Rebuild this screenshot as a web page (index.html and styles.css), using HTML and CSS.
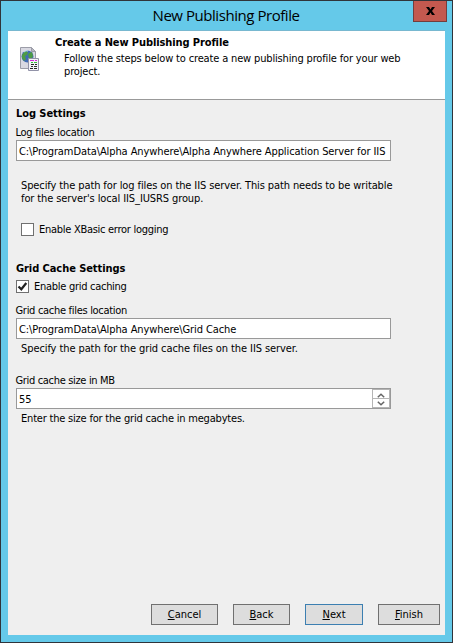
FILE: index.html
```
<!DOCTYPE html>
<html lang="en">
<head>
<meta charset="utf-8">
<title>New Publishing Profile</title>
<link rel="stylesheet" href="styles.css">
</head>
<body>
<div class="window">
  <div class="titlebar">
    <h1>New Publishing Profile</h1>
    <button class="close" aria-label="Close"><svg width="9" height="8" viewBox="0 0 9 8"><path d="M0 0H3L4.5 2.4 6 0H9L6 4 9 8H6L4.5 5.6 3 8H0L3 4Z"/></svg></button>
  </div>
  <div class="content">
    <header>
      <svg class="page-icon" width="21" height="26" viewBox="0 0 21 26">
        <path d="M1.500 1.500h11l4 4v17h-15z" fill="#d9d9e2" stroke="#9c9da8"/>
        <path d="M12.500 1.500v4h4z" fill="#b8b9c4" stroke="#9c9da8"/>
        <circle cx="8.500" cy="10.500" r="6" fill="#416bb5"/>
        <path d="M3 9l3-4 3 1-1 3-2 1 1 3-2 2-2-3zM10 7l3-1 1 4-2 4-2-2-1-3z" fill="#4d9b45"/>
        <path d="M5 6q2-2 4-1" stroke="#bfe0f5" fill="none"/>
        <path d="M9.500 12.500h10v12h-10z" fill="#f2f2f8" stroke="#9293a8"/>
        <path d="M11 14.500h4m1 0h2" stroke="#d02ad8"/>
        <path d="M12 16.500h2m1 0h3" stroke="#35b838"/>
        <path d="M12 18.500h3m1 0h2M11 22.500h3m1 0h3" stroke="#222"/>
        <path d="M12 20.500h2m1 0h3" stroke="#333"/>
      </svg>
      <div class="heading">
        <h2>Create a New Publishing Profile</h2>
        <p>Follow the steps below to create a new publishing profile for your web<br>project.</p>
      </div>
    </header>
    <main>
      <section class="log">
        <h2>Log Settings</h2>
        <label class="field-label">Log files location</label>
        <div class="field"><span>C:\ProgramData\Alpha Anywhere\Alpha Anywhere Application Server for IIS</span></div>
        <p class="hint log-hint">Specify the path for log files on the IIS server. This path needs to be writable<br>for the server's local IIS_IUSRS group.</p>
        <div class="check indented"><span class="box"></span><span>Enable XBasic error logging</span></div>
      </section>
      <section class="grid-cache">
        <h2>Grid Cache Settings</h2>
        <div class="check"><span class="box"><svg width="11" height="11" viewBox="0 0 11 11"><path d="M1.500 5.500L4.300 8.300 9.300 2" fill="none" stroke="#222" stroke-width="2.200"/></svg></span><span>Enable grid caching</span></div>
        <label class="field-label files-label">Grid cache files location</label>
        <div class="field"><span>C:\ProgramData\Alpha Anywhere\Grid Cache</span></div>
        <p class="hint">Specify the path for the grid cache files on the IIS server.</p>
        <label class="field-label size-label">Grid cache size in MB</label>
        <div class="field number"><span>55</span>
          <div class="spinner">
            <i><svg width="8" height="5" viewBox="0 0 8 5"><path d="M.8 4.300L4 1.200 7.200 4.300"/></svg></i>
            <i><svg width="8" height="5" viewBox="0 0 8 5"><path d="M.8 .7L4 3.800 7.200 .7"/></svg></i>
          </div>
        </div>
        <p class="hint size-hint">Enter the size for the grid cache in megabytes.</p>
      </section>
    </main>
    <footer>
      <button class="cancel"><span><u>C</u>ancel</span></button>
      <button class="back"><span><u>B</u>ack</span></button>
      <button class="next"><span><u>N</u>ext</span></button>
      <button class="finish"><span><u>F</u>inish</span></button>
    </footer>
  </div>
</div>
</body>
</html>
```
FILE: styles.css
```
* { box-sizing: border-box; }
body { margin: 0; color: #000; font: 11px/13px "DejaVu Sans Condensed", "DejaVu Sans", sans-serif; font-stretch: condensed; }
h1, h2, p { margin: 0; white-space: nowrap; }
h2 { font-size: 11px; line-height: 13px; font-weight: bold; letter-spacing: -.07px; }
button { padding: 0; font: inherit; color: inherit; }
.window { width: 453px; height: 643px; border: 1px solid #30343a; background: #65c9e9; padding: 0 7px 7px 6px; display: flex; flex-direction: column; }
.titlebar { height: 29px; flex: none; display: flex; justify-content: flex-end; position: relative; }
.titlebar h1 { position: absolute; left: 0; right: 0; top: 4px; text-align: center; font: 15px/21px "Open Sans", sans-serif; font-stretch: normal; letter-spacing: -.45px; }
.close { width: 34px; height: 21px; margin-right: -2px; position: relative; background: #c3594f; border: 1px solid #733d3d; border-top: 0; display: flex; align-items: center; justify-content: center; }
.content { flex: 1; margin-left: 1px; border-top: 1px solid #78b8d0; background: #efefef; display: flex; flex-direction: column; width: 437px; }
header { height: 69px; background: #fff; border-bottom: 1px solid #999; display: flex; }
.page-icon { margin: 15px 0 0 11px; flex: none; }
.heading { padding: 5px 0 0 15px; }
.heading h2 { letter-spacing: -.1px; }
.heading p { margin: 3px 0 0 9px; letter-spacing: -.155px; }
main { flex: 1; padding: 7px 0 0 8px; }
.field-label { display: block; margin: 6px 0 0 -.5px; white-space: nowrap; letter-spacing: -.25px; }
.field { width: 375px; height: 21px; margin-top: 1px; border: 1px solid #999; background: #fff; padding: 4px 2px 0; display: flex; white-space: nowrap; letter-spacing: -.09px; }
.hint { margin: 3px 0 0 5px; letter-spacing: -.09px; }
.log-hint { margin-top: 18px; letter-spacing: -.105px; }
.size-hint { letter-spacing: -.2px; }
.check { display: flex; gap: 5px; height: 13px; margin-top: 5px; white-space: nowrap; letter-spacing: -.28px; }
.check.indented { margin: 18px 0 0 5px; }
.box { width: 13px; height: 13px; border: 1px solid #707070; background: #fff; }
.box svg { display: block; }
.grid-cache { margin-top: 26px; }
.files-label { margin-top: 11px; letter-spacing: -.3px; }
.size-label { margin-top: 19px; letter-spacing: -.33px; }
.number { justify-content: space-between; padding: 0 0 0 2px; }
.number > span { padding-top: 4px; }
.spinner { width: 18px; height: 19px; background: #b5b5b5; padding: 1px; display: grid; grid-template-rows: 8px 8px; gap: 1px; }
.spinner i { background: #fff; display: flex; align-items: center; justify-content: center; }
.spinner i:first-child { align-items: flex-end; }
.spinner path { fill: none; stroke: #666; stroke-width: 1.5; }
footer { height: 42px; padding: 11px 5px 0 0; display: flex; justify-content: flex-end; gap: 15px; }
footer button { height: 21px; background: #ddd; border: 1px solid #707070; }
.cancel { width: 67px; }
.back { width: 57px; }
.next { width: 58px; border-color: #3c7fb1; }
.finish { width: 62px; }
```
